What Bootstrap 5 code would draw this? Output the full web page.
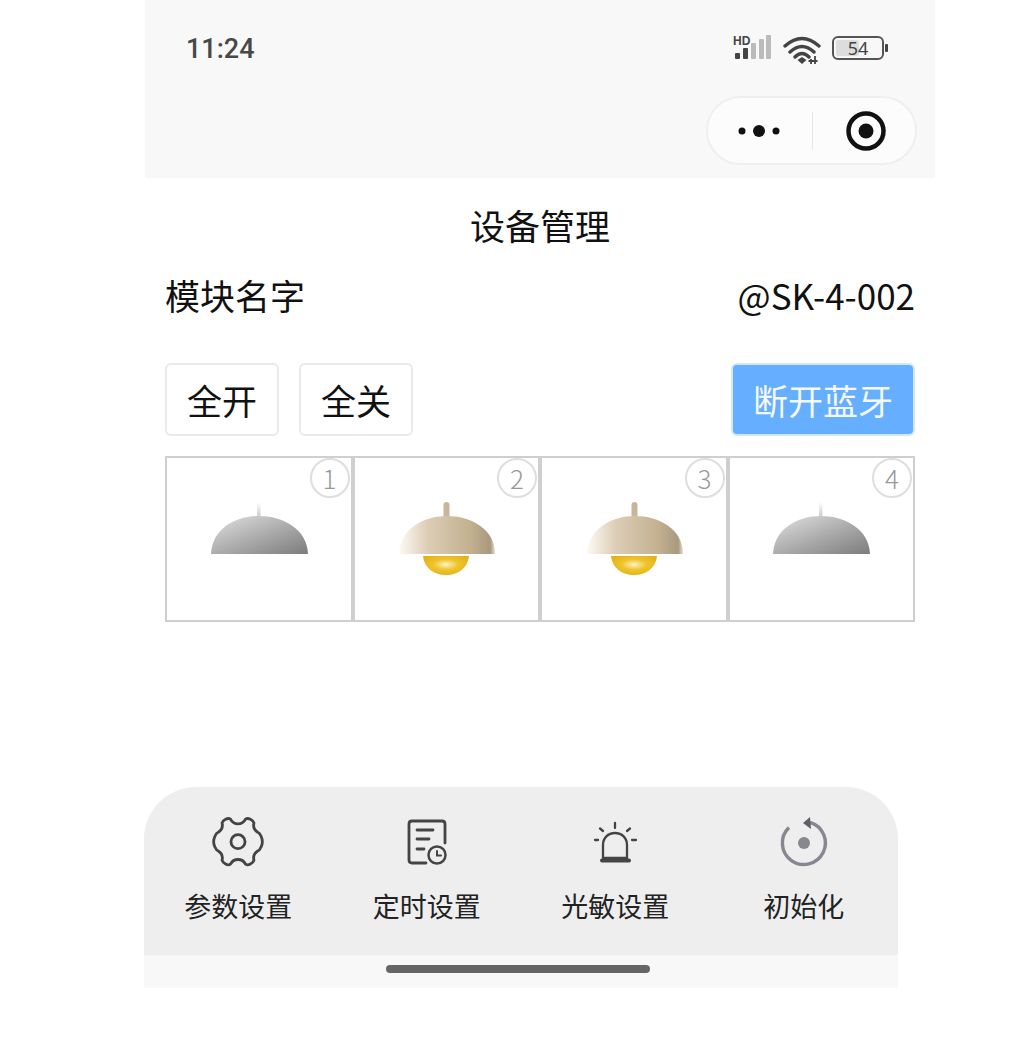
<!DOCTYPE html>
<html lang="zh-CN">
<head>
  <meta charset="UTF-8">
  <meta name="viewport" content="width=device-width, initial-scale=1">
  <title>设备管理</title>
  <link rel="stylesheet" href="https://cdn.jsdelivr.net/npm/bootstrap@5.3.0/dist/css/bootstrap.min.css">
  <script src="https://cdn.jsdelivr.net/npm/bootstrap@5.3.0/dist/js/bootstrap.bundle.min.js"></script>
  <style>
    body {
      background: #fff;
      font-family: "Noto Sans CJK SC", "Noto Sans", sans-serif;
      color: #1a1a1a;
    }
    .phone { width: 790px; margin-left: 145px; }
    .top-area { height: 178px; background: #f8f8f8; padding: 31px 18px 0 42px; }
    .status-row { height: 35px; padding-right: 29px; }
    .clock { font-size: 27px; line-height: 37px; height: 35px; font-weight: 500; color: #484848; font-family: Roboto, sans-serif; margin-left: -1px; }
    .capsule {
      width: 211px; height: 69px; margin-top: 30px; margin-left: auto;
      background: #fcfcfc; border: 2px solid #efefef; border-radius: 35px;
    }
    .capsule-left { width: 104px; }
    .capsule-line { width: 1px; height: 38px; background: #e6e6e6; }
    .capsule-right { flex: 1; padding-left: 4px; }
    .page-title { height: 96px; padding-top: 23px; font-size: 35px; line-height: 48px; text-align: center; color: #111; margin: 0; font-weight: 400; }
    .main { padding: 0 20px; }
    .info-row { height: 41px; font-size: 35px; line-height: 41px; color: #111; }
    .btn-row { margin-top: 48px; height: 73px; gap: 20px; }
    .plain-btn, .blue-btn {
      height: 73px; font-size: 35px; line-height: 1; border-radius: 6px; padding: 0; color: #111;
    }
    .plain-btn { width: 114px; background: #fff; border: 2px solid #eaeaea; }
    .plain-btn:hover { background: #fff; border-color: #eaeaea; color: #111; }
    .blue-btn { width: 184px; background: #66aeff; border: 2px solid #d2e6fd; color: #f4f9ff; }
    .blue-btn:hover { background: #66aeff; border-color: #d2e6fd; color: #f4f9ff; }
    .lamp-grid { margin-top: 20px; display: grid; grid-template-columns: repeat(4, 1fr); height: 166px; }
    .lamp-cell { position: relative; border: 2px solid #cfcfcf; background: #fff; }
    .lamp-cell svg { width: 100px; height: 80px; margin-top: 43px; }
    .num {
      position: absolute; top: 0; right: 1px; width: 40px; height: 40px;
      border: 2px solid #dedede; border-radius: 50%; background: #fff;
      font-size: 26px; line-height: 36px; text-align: center; color: #999; font-weight: 300;
    }
    .bottom-bar { width: 754px; margin: 165px 0 0 -1px; }
    .tools { height: 168px; background: #eeeeef; border-radius: 52px 52px 0 0; }
    .tool { flex: 1 1 0; padding-top: 27px; }
    .tool svg { width: 60px; height: 60px; display: block; }
    .tool-label { font-size: 27px; line-height: 38px; margin-top: 13px; color: #222; }
    .home-area { height: 33px; background: #f8f8f8; padding-top: 10px; }
    .home-line { width: 264px; height: 8px; background: #666; border-radius: 4px; margin-left: 242px; }
  </style>
</head>
<body>
  <div class="phone">
    <div class="top-area">
      <div class="status-row d-flex justify-content-between align-items-center">
        <span class="clock">11:24</span>
        <svg width="156" height="34" viewBox="0 0 156 34" fill="none">
          <text x="1" y="13" font-family="Liberation Sans" font-size="12" font-weight="700" fill="#444">HD</text>
          <rect x="3" y="21" width="5" height="6" rx="1" fill="#444"/>
          <rect x="11" y="16" width="5" height="11" rx="1" fill="#444"/>
          <rect x="19" y="11" width="5" height="16" rx="1" fill="#bbb"/>
          <rect x="27" y="7" width="5" height="20" rx="1" fill="#bbb"/>
          <rect x="34" y="3" width="5" height="24" rx="1" fill="#bbb"/>
          <path d="M53 14 Q70 -1 87 14 M58 20 Q70 9 82 20 M63 25 Q70 18 77 25" stroke="#444" stroke-width="3.400" stroke-linecap="round"/>
          <path d="M65.500 28 L70 25 L74.500 28 L70 32Z" fill="#444"/>
          <path d="M79 27v5M83 24v8M76.500 29h9" stroke="#444" stroke-width="1.800"/>
          <rect x="101" y="5" width="50" height="22" rx="5" stroke="#555" stroke-width="2"/>
          <rect x="104" y="8" width="23" height="16" rx="2" fill="#ddd"/>
          <text x="126" y="23" text-anchor="middle" font-family="Noto Sans" font-size="18" fill="#444">54</text>
          <rect x="153" y="12" width="3" height="8" rx="1" fill="#444"/>
        </svg>
      </div>
      <div class="capsule d-flex align-items-center">
        <div class="capsule-left d-flex justify-content-center align-items-center">
          <svg width="44" height="14" viewBox="0 0 44 14"><circle cx="4" cy="7" r="3.500" fill="#111"/><circle cx="21" cy="7" r="6" fill="#111"/><circle cx="38" cy="7" r="3.500" fill="#111"/></svg>
        </div>
        <div class="capsule-line"></div>
        <div class="capsule-right d-flex justify-content-center align-items-center">
          <svg width="42" height="42" viewBox="0 0 42 42"><circle cx="21" cy="21" r="17.500" fill="none" stroke="#111" stroke-width="4.500"/><circle cx="21" cy="21" r="7.500" fill="#111"/></svg>
        </div>
      </div>
    </div>

    <h1 class="page-title">设备管理</h1>

    <div class="main">
      <div class="info-row d-flex justify-content-between">
        <span>模块名字</span>
        <span>@SK-4-002</span>
      </div>
      <div class="btn-row d-flex">
        <button class="btn plain-btn">全开</button>
        <button class="btn plain-btn">全关</button>
        <button class="btn blue-btn ms-auto">断开蓝牙</button>
      </div>
      <div class="lamp-grid">
        <div class="lamp-cell d-flex justify-content-center align-items-start">
          <svg viewBox="0 0 100 80">
            <defs>
              <linearGradient id="offDome" x1="0" y1="0" x2="1" y2="1"><stop offset="0" stop-color="#e2e2e2"/><stop offset=".55" stop-color="#a8a8a8"/><stop offset="1" stop-color="#7c7c7c"/></linearGradient>
              <linearGradient id="offStem" x1="0" y1="0" x2="0" y2="1"><stop offset="0" stop-color="#fff"/><stop offset="1" stop-color="#c8c8c8"/></linearGradient>
              <linearGradient id="onDome" x1="0" y1="0" x2="1" y2="0"><stop offset="0" stop-color="#fdfaf5"/><stop offset=".3" stop-color="#dccdb5"/><stop offset=".75" stop-color="#c2b08f"/><stop offset=".95" stop-color="#a8997f"/><stop offset="1" stop-color="#e6dfd2"/></linearGradient>
              <radialGradient id="bulb" cx=".5" cy=".45" r=".6"><stop offset="0" stop-color="#fdf3c4"/><stop offset=".45" stop-color="#eec52c"/><stop offset="1" stop-color="#e2b116"/></radialGradient>
            </defs>
            <rect x="48" y="1" width="3.500" height="16" fill="url(#offStem)"/>
            <path d="M2 53 C3 28 26 15 50 15 C74 15 98 28 99 53Z" fill="url(#offDome)"/>
          </svg>
          <span class="num">1</span>
        </div>
        <div class="lamp-cell d-flex justify-content-center align-items-start">
          <svg viewBox="0 0 100 80">
            <rect x="47.500" y="1" width="6" height="17" rx="3" fill="#c9b69a"/>
            <path d="M3 53 C4 28 27 15 51 15 C75 15 99 28 99 53Z" fill="url(#onDome)"/>
            <path d="M27 55 H73 C72 67 62 74 50 74 C38 74 28 67 27 55Z" fill="url(#bulb)"/>
          </svg>
          <span class="num">2</span>
        </div>
        <div class="lamp-cell d-flex justify-content-center align-items-start">
          <svg viewBox="0 0 100 80">
            <rect x="47.500" y="1" width="6" height="17" rx="3" fill="#c9b69a"/>
            <path d="M3 53 C4 28 27 15 51 15 C75 15 99 28 99 53Z" fill="url(#onDome)"/>
            <path d="M27 55 H73 C72 67 62 74 50 74 C38 74 28 67 27 55Z" fill="url(#bulb)"/>
          </svg>
          <span class="num">3</span>
        </div>
        <div class="lamp-cell d-flex justify-content-center align-items-start">
          <svg viewBox="0 0 100 80">
            <rect x="48" y="1" width="3.500" height="16" fill="url(#offStem)"/>
            <path d="M2 53 C3 28 26 15 50 15 C74 15 98 28 99 53Z" fill="url(#offDome)"/>
          </svg>
          <span class="num">4</span>
        </div>
      </div>
    </div>

    <div class="bottom-bar">
      <div class="tools d-flex">
        <div class="tool d-flex flex-column align-items-center">
          <svg viewBox="-2 0.5 64 64" fill="none" stroke="#444" stroke-width="3" stroke-linejoin="round">
            <path d="M22 6 C24 10 27 11 30 11 C33 11 36 10 38 6 C41 4 46 7 47 10 C46 14 48 18 51 20 C54 21 56 27 56 30 C56 33 54 39 51 40 C48 42 46 46 47 50 C46 53 41 56 38 54 C36 50 33 49 30 49 C27 49 24 50 22 54 C19 56 14 53 13 50 C14 46 12 42 9 40 C6 39 4 33 4 30 C4 27 6 21 9 20 C12 18 14 14 13 10 C14 7 19 4 22 6Z"/>
            <circle cx="30" cy="30" r="7.500"/>
          </svg>
          <div class="tool-label">参数设置</div>
        </div>
        <div class="tool d-flex flex-column align-items-center">
          <svg viewBox="0 0 60 60" fill="none" stroke="#444" stroke-width="2.800" stroke-linecap="round">
            <path d="M29 49 H15 Q12 49 12 46 V10 Q12 7 15 7 H45 Q48 7 48 10 V29"/>
            <path d="M20 16 H36 M20 25 H32 M20 35 H27"/>
            <circle cx="40" cy="41" r="8.500" stroke-width="2.500"/>
            <path d="M40 37 V41.500 H44" stroke-width="2"/>
          </svg>
          <div class="tool-label">定时设置</div>
        </div>
        <div class="tool d-flex flex-column align-items-center">
          <svg viewBox="0 0 60 60" fill="none" stroke="#444" stroke-width="2.300" stroke-linecap="round">
            <path d="M18 44 V31 C18 24 23 19 30 19 C37 19 42 24 42 31 V44 Z"/>
            <path d="M17 46.500 H44" stroke-width="4" />
            <path d="M30 9 V14 M15 14.500 L18 17 M45 14.500 L42 17 M10 26 H13 M47 26 H51"/>
          </svg>
          <div class="tool-label">光敏设置</div>
        </div>
        <div class="tool d-flex flex-column align-items-center">
          <svg viewBox="0 0 60 60" fill="none" stroke="#87878f" stroke-width="3.400">
            <path d="M36 8.400 A21.500 21.500 0 1 1 15 13.500"/>
            <path d="M29 9 L36 3 L37 15Z" fill="#5f5f66" stroke="none"/>
            <circle cx="30" cy="29" r="6" fill="#87878f" stroke="none"/>
          </svg>
          <div class="tool-label">初始化</div>
        </div>
      </div>
      <div class="home-area">
        <div class="home-line"></div>
      </div>
    </div>
  </div>
</body>
</html>
